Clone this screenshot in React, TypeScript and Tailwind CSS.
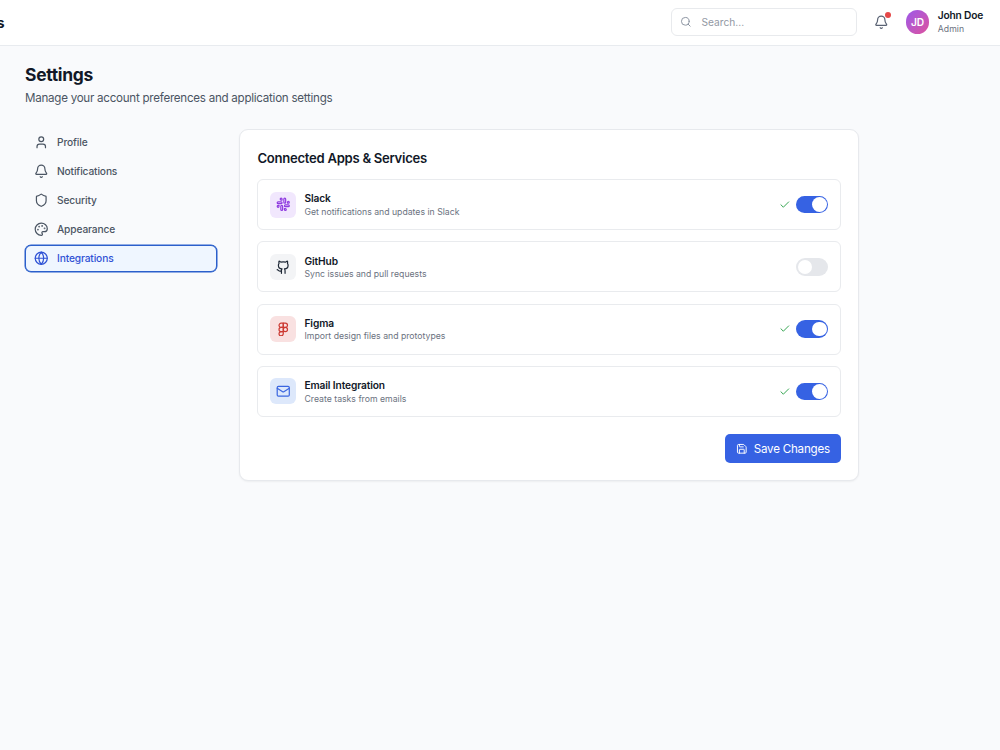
import type { ReactNode } from 'react';
import { Bell, Check, Figma, Github, Globe, Mail, Palette, Save, Search, Shield, Slack, User } from 'lucide-react';

const navItems = [
  { label: 'Profile', icon: User },
  { label: 'Notifications', icon: Bell },
  { label: 'Security', icon: Shield },
  { label: 'Appearance', icon: Palette },
  { label: 'Integrations', icon: Globe, active: true },
];

const services = [
  { name: 'Slack', detail: 'Get notifications and updates in Slack', icon: Slack, tile: 'bg-[#f1e7fd] text-[#8f3be0]', on: true },
  { name: 'GitHub', detail: 'Sync issues and pull requests', icon: Github, tile: 'bg-[#f3f4f6] text-[#1f2937]', on: false },
  { name: 'Figma', detail: 'Import design files and prototypes', icon: Figma, tile: 'bg-[#f9e1e1] text-[#cc3a33]', on: true },
  { name: 'Email Integration', detail: 'Create tasks from emails', icon: Mail, tile: 'bg-[#dde8fb] text-[#3b66e0]', on: true },
];

function Toggle({ on }: { on: boolean }) {
  return (
    <button
      role="switch"
      aria-checked={on}
      className={`flex h-[17.5px] w-8 items-center rounded-full px-[1.5px] ${on ? 'justify-end bg-[#3662e3]' : 'justify-start bg-[#e5e7eb]'}`}
    >
      <span className={`rounded-full bg-white ${on ? 'size-[14.5px]' : 'ml-[0.5px] size-[13.5px]'}`} />
    </button>
  );
}

function Header() {
  return (
    <header className="flex h-[46px] items-center justify-between border-b border-[#e8ebef] bg-white pr-[17px] pb-[1px]">
      <div className="flex w-[4.5px] justify-end overflow-hidden pt-[2px] text-[14.5px] font-bold text-[#111827]">
        <span>Settings</span>
      </div>
      <div className="flex items-center">
        <div className="flex h-7 w-[186px] items-center gap-[9.5px] rounded-[6px] border border-[#e8eaed] pl-[8px]">
          <Search className="size-[11.6px] text-[#8b93a1]" />
          <span className="pt-[1px] text-[10.2px] text-[#9298a3]">Search...</span>
        </div>
        <div className="relative ml-[16.5px]">
          <Bell className="size-[14.5px] text-[#596273]" />
          <span className="absolute -top-[3px] -right-[3px] size-[6px] rounded-full bg-[#e54848]" />
        </div>
        <div className="ml-[17.5px] flex size-[23.5px] items-center justify-center rounded-full bg-linear-to-br from-[#9c55ea] to-[#de4e9d] pt-[1px] text-[10.2px] font-[560] text-white">
          JD
        </div>
        <div className="ml-[8.5px]">
          <p className="text-[10.2px] leading-[13.5px] font-[560] tracking-[-0.2px] text-[#111827]">John Doe</p>
          <p className="text-[8.7px] leading-[12.5px] text-[#6b7280]">Admin</p>
        </div>
      </div>
    </header>
  );
}

function Sidebar() {
  return (
    <nav className="flex w-[192px] flex-col gap-[2px]">
      {navItems.map(({ label, icon: Icon, active }) => (
        <a
          key={label}
          className={`flex h-[27px] items-center gap-[9px] rounded-[6px] text-[10.2px] font-[540] tracking-[-0.13px] ${
            active
              ? 'border border-[#2b5fcb] bg-[#eff6ff] pl-[7.5px] text-[#2f52d5] shadow-[0_0_0_0.5px_#2b5fcb]'
              : 'pl-[8.5px] text-[#4b5563]'
          }`}
        >
          <Icon className="size-[14.5px]" />
          {label}
        </a>
      ))}
    </nav>
  );
}

function Card({ children }: { children: ReactNode }) {
  return (
    <section className="h-[352px] w-[620px] rounded-[9px] border border-[#e7e9ed] bg-white pt-[19px] pr-[17.5px] pl-[17px] shadow-[0_1px_2px_rgba(0,0,0,0.05)]">
      {children}
    </section>
  );
}

export default function App() {
  return (
    <div className="h-[750px] w-[1000px] overflow-hidden bg-[#f9fafc] font-['Inter',sans-serif]">
      <Header />
      <main className="pt-[17px] pl-[25px]">
        <h1 className="text-[17.45px] leading-[23px] font-bold tracking-[-0.28px] text-[#111827]">Settings</h1>
        <p className="mt-1 text-[11.6px] leading-[17px] tracking-[-0.26px] text-[#4b5563]">
          Manage your account preferences and application settings
        </p>
        <div className="mt-[22px] flex gap-[22px]">
          <Sidebar />
          <Card>
            <h2 className="pl-[0.5px] text-[13.1px] leading-[18px] font-semibold tracking-[-0.28px] text-[#111827]">
              Connected Apps &amp; Services
            </h2>
            <div className="mt-3 flex flex-col gap-[11.3px]">
              {services.map(({ name, detail, icon: Icon, tile, on }) => (
                <div key={name} className="flex h-[51px] items-center rounded-[6px] border border-[#e9ebee] pr-[11.5px] pl-[11.8px]">
                  <div className={`flex size-[26px] items-center justify-center rounded-[6px] ${tile}`}>
                    <Icon className="size-[14.5px]" />
                  </div>
                  <div className="ml-[8.7px] flex-1 pt-[2px]">
                    <h3 className="text-[10.2px] leading-[13.4px] font-[560] tracking-[-0.12px] text-[#111827]">{name}</h3>
                    <p className="text-[8.7px] leading-[13px] text-[#6b7280]">{detail}</p>
                  </div>
                  {on && <Check className="mr-[5.5px] size-[11.6px] text-[#2fa34c]" />}
                  <Toggle on={on} />
                </div>
              ))}
            </div>
            <div className="mt-[17px] flex justify-end">
              <button className="flex h-[29px] w-[116px] items-center justify-center gap-[6px] rounded-[5px] bg-[#3662e3] pl-[1px] text-[11.6px] tracking-[-0.22px] text-white">
                <Save className="size-[11.6px]" />
                <span className="pt-[2px]">Save Changes</span>
              </button>
            </div>
          </Card>
        </div>
      </main>
    </div>
  );
}
